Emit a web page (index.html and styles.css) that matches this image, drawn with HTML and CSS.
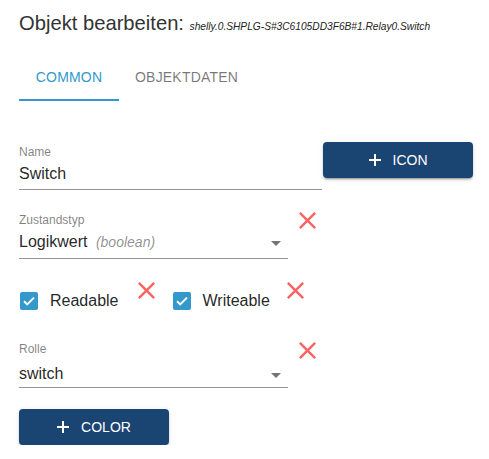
FILE: index.html
```html
<!DOCTYPE html>
<html lang="de">
<head>
<meta charset="utf-8">
<title>Objekt bearbeiten</title>
<link rel="stylesheet" href="styles.css">
</head>
<body>
<div class="page">
  <h1 class="title">Objekt bearbeiten: <span class="obj-id">shelly.0.SHPLG-S#3C6105DD3F6B#1.Relay0.Switch</span></h1>

  <div class="tabs">
    <div class="tab active">COMMON</div>
    <div class="tab">OBJEKTDATEN</div>
  </div>

  <div class="row row-name">
    <div class="field field-wide">
      <div class="label">Name</div>
      <div class="value">Switch</div>
    </div>
    <button class="btn"><svg class="plus" viewBox="0 0 12 12" width="12" height="12"><path d="M5 0h2v5h5v2H7v5H5V7H0V5h5z"/></svg><span>ICON</span></button>
  </div>

  <div class="row row-type">
    <div class="field field-narrow">
      <div class="label">Zustandstyp</div>
      <div class="value select"><span class="val-text">Logikwert <em class="hint">(boolean)</em></span><svg class="arrow" viewBox="0 0 10 5" width="10" height="5"><path d="M0 0h10L5 5z"/></svg></div>
    </div>
    <svg class="del del-field" viewBox="5 5 14 14" width="17" height="17"><path d="M19 6.41L17.59 5 12 10.59 6.41 5 5 6.41 10.59 12 5 17.59 6.41 19 12 13.41 17.59 19 19 17.59 13.41 12z"/></svg>
  </div>

  <div class="row row-checks">
    <label class="check">
      <span class="box"><svg viewBox="0 0 18 18" width="18" height="18"><path d="M4 9.2l3.2 3.2L14 5.6" fill="none" stroke="#fff" stroke-width="2"/></svg></span>
      <span class="check-text">Readable</span>
    </label>
    <svg class="del del-check1" viewBox="5 5 14 14" width="17" height="17"><path d="M19 6.41L17.59 5 12 10.59 6.41 5 5 6.41 10.59 12 5 17.59 6.41 19 12 13.41 17.59 19 19 17.59 13.41 12z"/></svg>
    <label class="check check2">
      <span class="box"><svg viewBox="0 0 18 18" width="18" height="18"><path d="M4 9.2l3.2 3.2L14 5.6" fill="none" stroke="#fff" stroke-width="2"/></svg></span>
      <span class="check-text">Writeable</span>
    </label>
    <svg class="del del-check2" viewBox="5 5 14 14" width="17" height="17"><path d="M19 6.41L17.59 5 12 10.59 6.41 5 5 6.41 10.59 12 5 17.59 6.41 19 12 13.41 17.59 19 19 17.59 13.41 12z"/></svg>
  </div>

  <div class="row row-role">
    <div class="field field-narrow">
      <div class="label">Rolle</div>
      <div class="value select value-role"><span class="val-text">switch</span><svg class="arrow" viewBox="0 0 10 5" width="10" height="5"><path d="M0 0h10L5 5z"/></svg></div>
    </div>
    <svg class="del del-role" viewBox="5 5 14 14" width="17" height="17"><path d="M19 6.41L17.59 5 12 10.59 6.41 5 5 6.41 10.59 12 5 17.59 6.41 19 12 13.41 17.59 19 19 17.59 13.41 12z"/></svg>
  </div>

  <button class="btn btn-color"><svg class="plus" viewBox="0 0 12 12" width="12" height="12"><path d="M5 0h2v5h5v2H7v5H5V7H0V5h5z"/></svg><span>COLOR</span></button>
</div>
</body>
</html>
```

FILE: styles.css
```css
html, body {
  margin: 0;
  padding: 0;
  background: #fff;
}

body {
  font-family: "Liberation Sans", Arial, sans-serif;
  color: rgba(0, 0, 0, 0.87);
}

.page {
  padding: 11px 19px 0 19px;
}

.title {
  margin: 0;
  height: 24px;
  font-size: 20.2px;
  line-height: 24px;
  font-weight: normal;
  color: #333;
  white-space: nowrap;
}

.obj-id {
  font-size: 10.2px;
  line-height: 1;
  font-style: italic;
  color: #222;
}

.tabs {
  display: flex;
  margin-top: 18px;
  height: 48px;
}

.tab {
  min-width: 68px;
  padding: 0 16px;
  height: 48px;
  line-height: 48px;
  font-size: 14px;
  letter-spacing: 0.2px;
  color: rgba(0, 0, 0, 0.54);
  text-align: center;
  box-sizing: border-box;
}

.tab.active {
  width: 100px;
  color: #3399cc;
  border-bottom: 2px solid #3399cc;
}

.row {
  display: flex;
  align-items: flex-start;
}

.row-name {
  margin-top: 41px;
}

.row-type {
  margin-top: 22px;
}

.row-checks {
  margin-top: 23px;
}

.row-role {
  margin-top: 21px;
}

.field {
  flex: none;
}

.field-wide {
  width: 303px;
  padding-top: 3px;
}

.field-narrow {
  width: 269px;
  padding-top: 1px;
}

.label {
  font-size: 12px;
  line-height: 14px;
  color: rgba(0, 0, 0, 0.5);
}

.value {
  font-size: 16px;
  line-height: 19px;
  padding: 5px 0 6px 0;
  border-bottom: 1px solid rgba(0, 0, 0, 0.42);
  color: rgba(0, 0, 0, 0.87);
}

.select {
  display: flex;
  align-items: flex-start;
}

.val-text {
  flex: 1;
}

.hint {
  font-size: 14px;
  color: rgba(0, 0, 0, 0.45);
  margin-left: 4px;
}

.arrow {
  fill: #757575;
  margin-top: 9px;
  margin-right: 7px;
}

.value-role {
  padding-top: 8px;
  padding-bottom: 4px;
}

.btn {
  flex: none;
  display: flex;
  align-items: center;
  justify-content: center;
  gap: 12px;
  width: 150px;
  height: 36px;
  border: none;
  border-radius: 4px;
  background: #1a4472;
  color: #fff;
  font-family: "Liberation Sans", Arial, sans-serif;
  font-size: 14px;
  font-weight: 500;
  padding: 0;
  box-shadow: 0 3px 1px -2px rgba(0, 0, 0, 0.2), 0 2px 2px 0 rgba(0, 0, 0, 0.14), 0 1px 5px 0 rgba(0, 0, 0, 0.12);
}

.row-name .btn {
  margin-left: 1px;
}

.plus {
  fill: #fff;
}

.del {
  fill: #ff6262;
  flex: none;
}

.del-field {
  margin-left: 11px;
}

.check {
  display: flex;
  align-items: center;
  padding: 10px 0;
  margin-left: 1px;
}

.check2 {
  margin-left: 18px;
}

.box {
  display: block;
  width: 18px;
  height: 18px;
  border-radius: 2px;
  background: #3399cc;
}

.box svg {
  display: block;
}

.check-text {
  margin-left: 12px;
  font-size: 16px;
  line-height: 18px;
  color: rgba(0, 0, 0, 0.87);
}

.del-check1 {
  margin-left: 19px;
}

.del-check2 {
  margin-left: 17px;
}

.del-role {
  margin-left: 11px;
  margin-top: 1px;
}

.btn-color {
  margin-top: 21px;
}
```
